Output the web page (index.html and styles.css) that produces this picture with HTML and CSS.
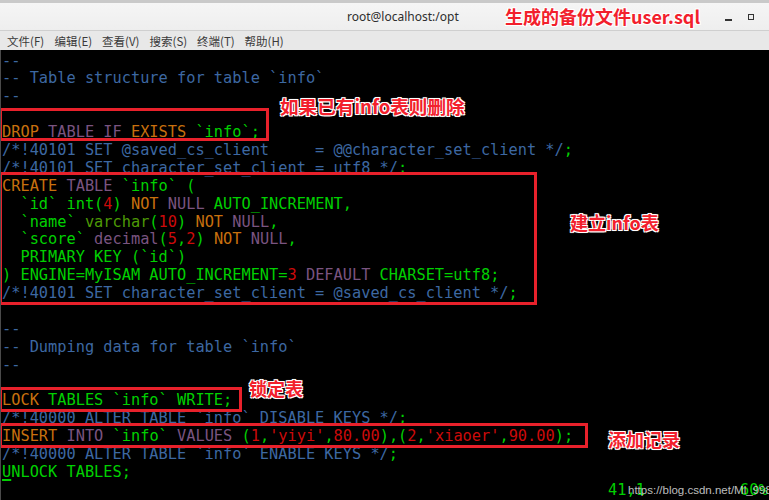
FILE: index.html
```html
<!DOCTYPE html>
<html>
<head>
<meta charset="utf-8">
<link rel="stylesheet" href="styles.css">
</head>
<body>
<div class="window">
  <div class="titlebar">
    <span class="title">root@localhost:/opt</span>
    <span class="ctl-min"></span>
    <span class="ctl-max"></span>
  </div>
  <div class="menubar">
    <span class="menu">文件(F)</span>
    <span class="menu">编辑(E)</span>
    <span class="menu">查看(V)</span>
    <span class="menu">搜索(S)</span>
    <span class="menu">终端(T)</span>
    <span class="menu">帮助(H)</span>
  </div>
  <div class="term">
<div class="ln c">--</div>
<div class="ln c">-- Table structure for table `info`</div>
<div class="ln c">--</div>
<div class="ln"> </div>
<div class="ln"><span class="o">DROP</span><span class="p"> TABLE IF</span><span class="o"> EXISTS</span><span class="g"> `info`;</span></div>
<div class="ln c">/*!40101 SET @saved_cs_client     = @@character_set_client */<span class="g">;</span></div>
<div class="ln c">/*!40101 SET character_set_client = utf8 */<span class="g">;</span></div>
<div class="ln"><span class="o">CREATE</span><span class="p"> TABLE</span><span class="g"> `info` (</span></div>
<div class="ln g">  `id` int(<span class="r">4</span>) <span class="o">NOT</span><span class="p"> NULL</span> AUTO_INCREMENT,</div>
<div class="ln g">  `name` <span class="dg">varchar</span>(<span class="r">10</span>) <span class="o">NOT</span><span class="p"> NULL</span>,</div>
<div class="ln g">  `score` <span class="p">decimal</span>(<span class="r">5</span>,<span class="r">2</span>) <span class="o">NOT</span><span class="p"> NULL</span>,</div>
<div class="ln g">  PRIMARY KEY (`id`)</div>
<div class="ln g">) ENGINE=MyISAM AUTO_INCREMENT=<span class="r">3</span><span class="p"> DEFAULT</span> CHARSET=utf8;</div>
<div class="ln c">/*!40101 SET character_set_client = @saved_cs_client */<span class="g">;</span></div>
<div class="ln"> </div>
<div class="ln c">--</div>
<div class="ln c">-- Dumping data for table `info`</div>
<div class="ln c">--</div>
<div class="ln"> </div>
<div class="ln g"><span class="o">LOCK</span> TABLES `info` WRITE;</div>
<div class="ln c">/*!40000 ALTER TABLE `info` DISABLE KEYS */<span class="g">;</span></div>
<div class="ln g"><span class="o">INSERT</span><span class="p"> INTO</span> `info`<span class="p"> VALUES</span> (<span class="r">1</span>,<span class="r">'yiyi'</span>,<span class="r">80.00</span>),(<span class="r">2</span>,<span class="r">'xiaoer'</span>,<span class="r">90.00</span>);</div>
<div class="ln c">/*!40000 ALTER TABLE `info` ENABLE KEYS */<span class="g">;</span></div>
<div class="ln g"><span class="cur">U</span>NLOCK TABLES;</div>
<div class="ln g status"><span class="pos">41,1</span><span class="pct">60%</span></div>

    <div class="box box-drop"></div>
    <div class="box box-create"></div>
    <div class="box box-lock"></div>
    <div class="box box-insert"></div>
    <div class="note note-drop">如果已有info表则删除</div>
    <div class="note note-create">建立info表</div>
    <div class="note note-lock">锁定表</div>
    <div class="note note-insert">添加记录</div>
    <div class="watermark">https://blog.csdn.net/Ml_998</div>
  </div>
  <div class="note note-title">生成的备份文件user.sql</div>
</div>
</body>
</html>
```

FILE: styles.css
```css
html, body {
  margin: 0;
  padding: 0;
  background: #000;
  width: 769px;
  height: 500px;
  overflow: hidden;
}

.window {
  position: relative;
  width: 769px;
  height: 500px;
  display: flex;
  flex-direction: column;
  background: #000;
}

.titlebar {
  height: 27px;
  border-top: 3px solid #c9c9c9;
  background: linear-gradient(#f5f5f5, #eeeeee);
  display: flex;
  align-items: center;
  position: relative;
  flex: none;
}

.title {
  margin-left: 347px;
  font-family: "Noto Sans", "DejaVu Sans", sans-serif;
  font-size: 12px;
  color: #2e2e2e;
}

.ctl-min {
  position: absolute;
  left: 725px;
  top: 16px;
  width: 7px;
  height: 2px;
  background: #333;
}

.ctl-max {
  position: absolute;
  left: 748px;
  top: 11px;
  width: 4px;
  height: 4px;
  border: 1px solid #333;
  background: #eee;
}

.menubar {
  height: 19px;
  flex: none;
  border-top: 1px solid #cfcfcf;
  background: #e8e8e8;
  display: flex;
  align-items: center;
  padding-left: 7px;
  gap: 10.5px;
  font-family: "Noto Sans CJK SC", "DejaVu Sans", sans-serif;
  font-size: 11.5px;
  color: #3a3a3a;
}

.menu {
  width: 37px;
  white-space: nowrap;
}

.term {
  position: relative;
  flex: 1;
  background: #000;
  border-left: 1px solid #4a4a4a;
  padding: 2.5px 0 0 1px;
  font-family: "DejaVu Sans Mono", monospace;
  font-size: 15.3px;
  line-height: 17.9px;
  color: #00d000;
  overflow: hidden;
}

.ln {
  height: 17.9px;
  white-space: pre;
}

.c { color: #3d68a2; }
.g { color: #00d000; }
.o { color: #c8700e; }
.p { color: #7a5480; }
.r { color: #cc0a0a; }
.dg { color: #4e9a06; }

.cur {
  text-decoration: underline;
  text-decoration-thickness: 2px;
  text-underline-offset: 2px;
}

.status {
  position: relative;
}

.pos {
  position: absolute;
  left: 606px;
}

.pct {
  position: absolute;
  left: 738px;
}

.box {
  position: absolute;
  border: 3px solid #e8212b;
  box-sizing: border-box;
}

.box-drop { left: -2px; top: 58px; width: 270px; height: 33px; }
.box-create { left: -2px; top: 122px; width: 538px; height: 133px; }
.box-lock { left: -2px; top: 337px; width: 243px; height: 25px; }
.box-insert { left: -2px; top: 373px; width: 589px; height: 25px; }

.note {
  position: absolute;
  font-family: "Noto Sans CJK SC", sans-serif;
  font-weight: 700;
  font-size: 18px;
  line-height: 22px;
  color: #f2202c;
  white-space: nowrap;
  text-shadow: -1px -1px 0 #fff, 1px -1px 0 #fff, -1px 1px 0 #fff, 1px 1px 0 #fff, 0 0 2px #fff;
}

.note-drop { left: 279px; top: 45px; font-size: 18.6px; }
.note-create { left: 569px; top: 161px; }
.note-lock { left: 248px; top: 327px; }
.note-insert { left: 607px; top: 378px; }
.note-title { left: 505px; top: 5px; font-size: 18px; }

.watermark {
  position: absolute;
  left: 627px;
  top: 432px;
  font-family: "Liberation Sans", Arial, sans-serif;
  font-size: 11.5px;
  color: rgba(225, 225, 225, 0.85);
}
```
